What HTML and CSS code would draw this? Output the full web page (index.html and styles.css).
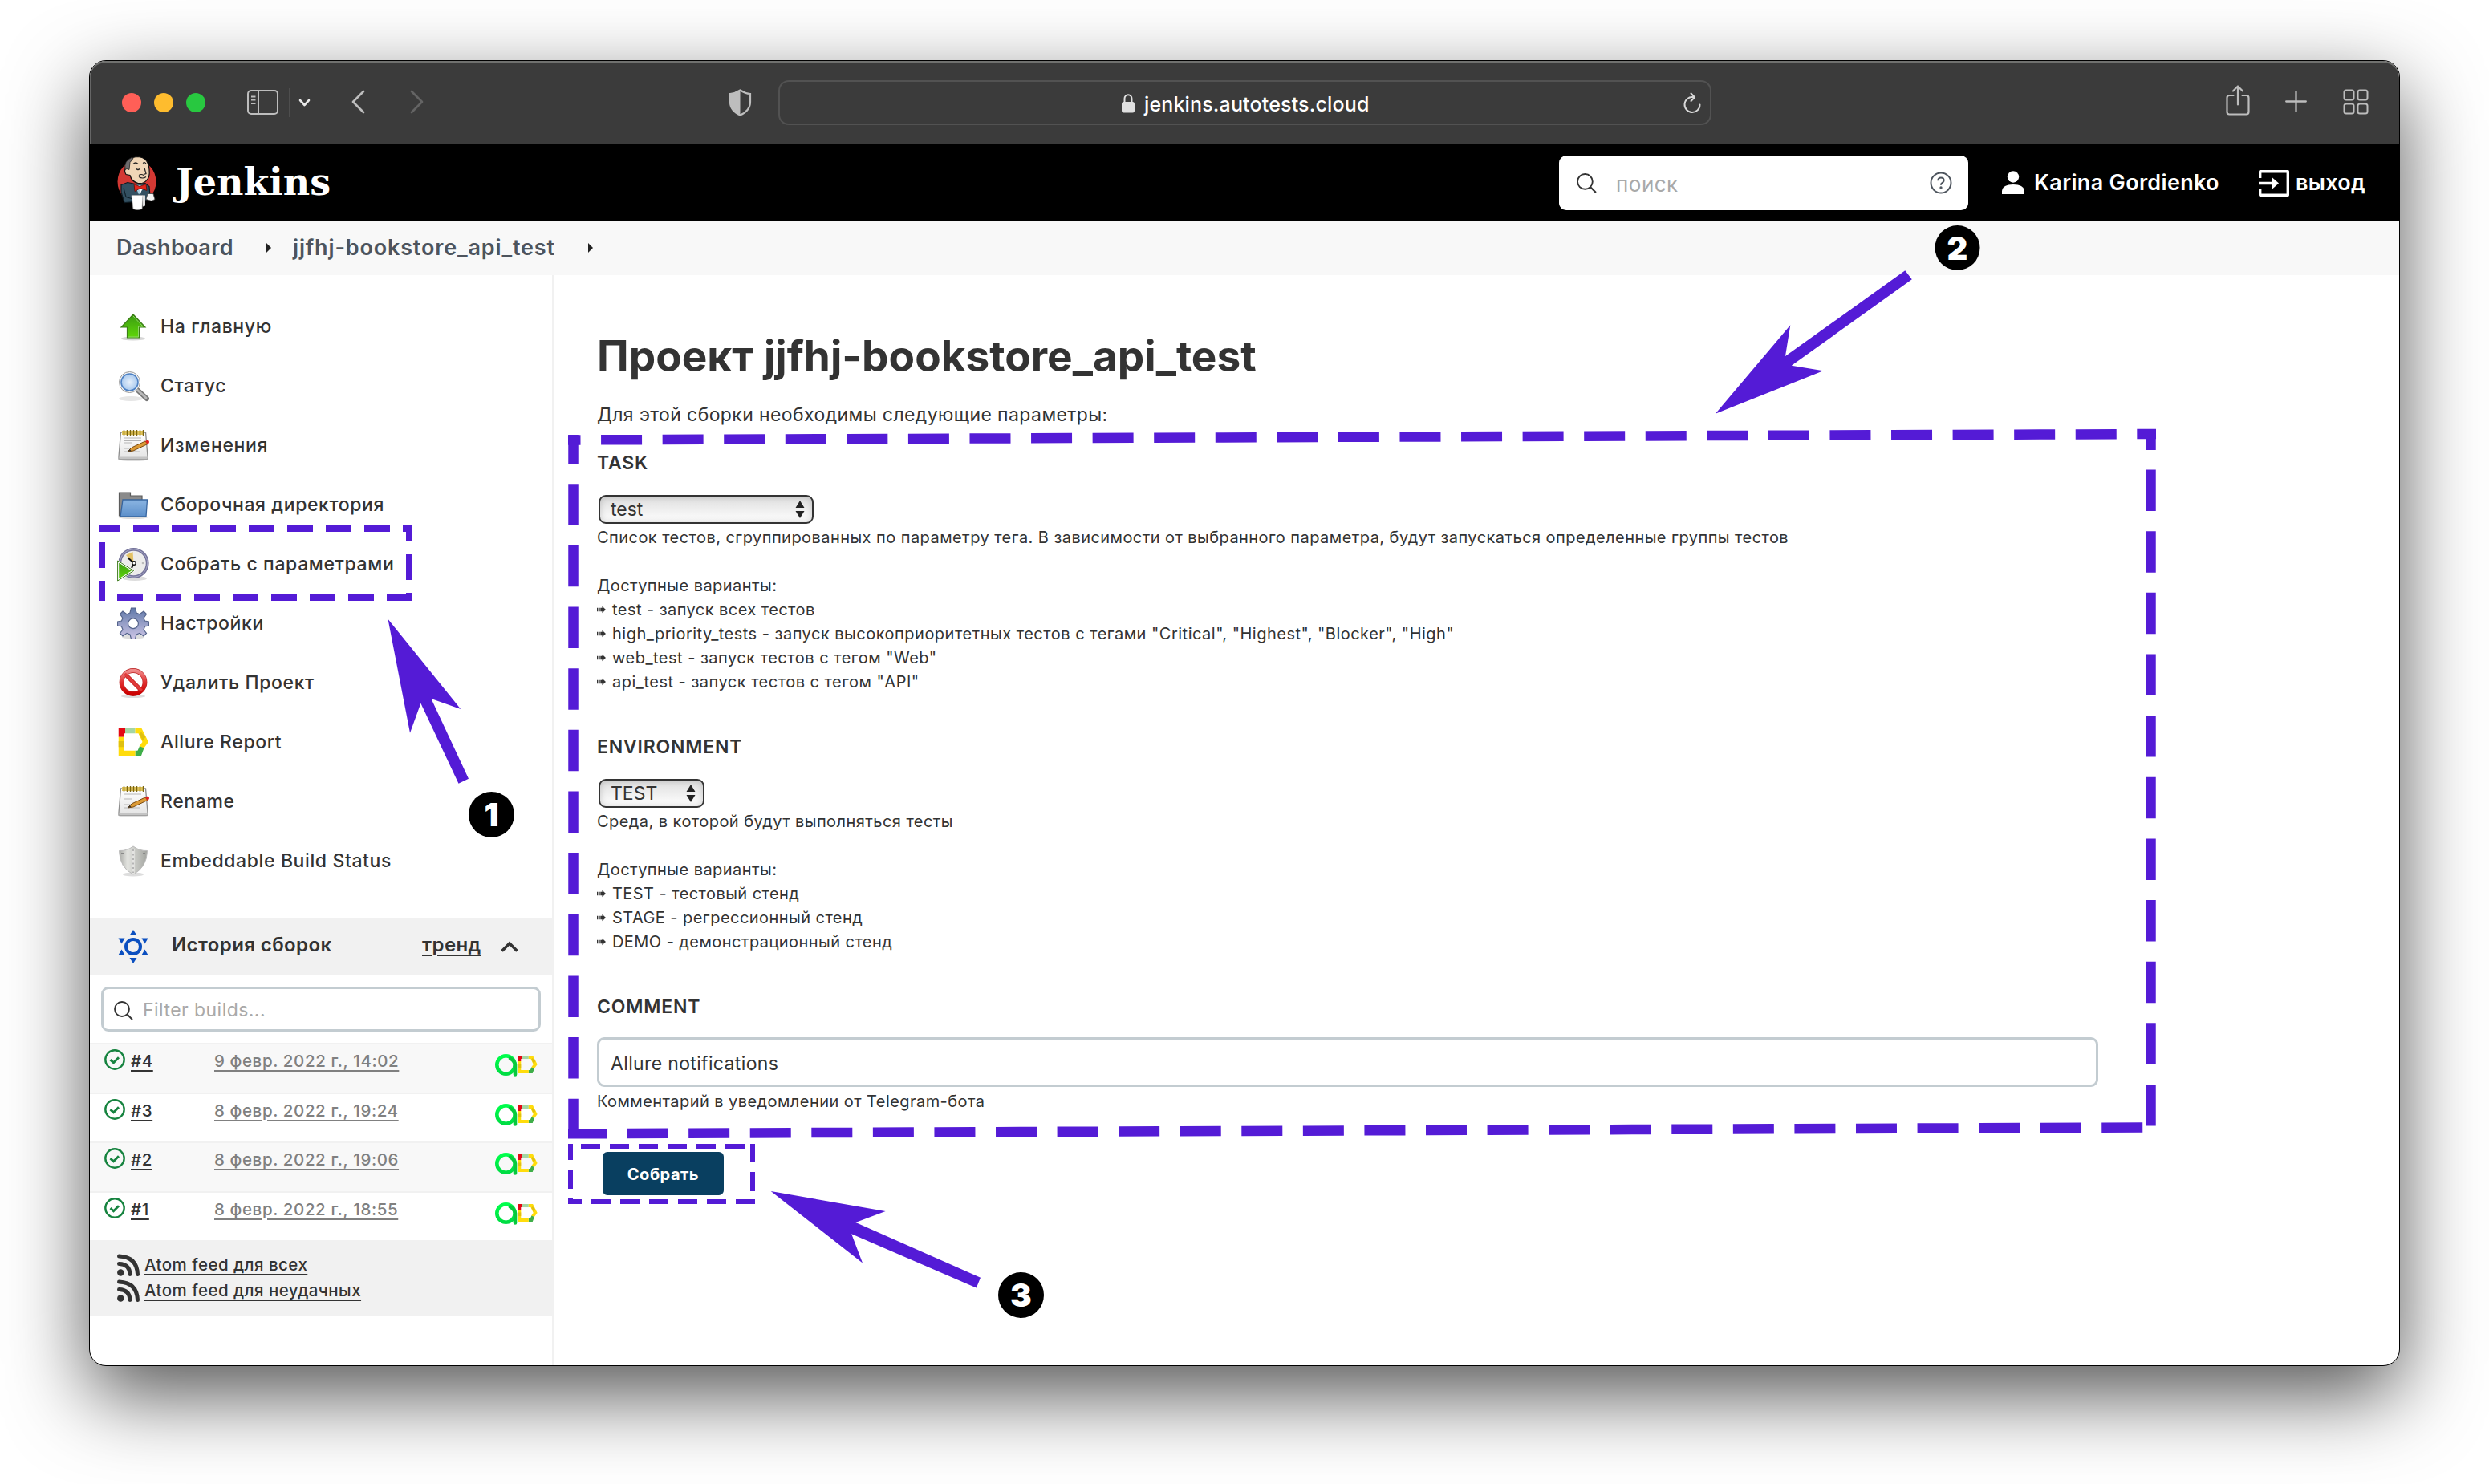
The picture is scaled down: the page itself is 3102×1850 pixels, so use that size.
FILE: index.html
```html
<!DOCTYPE html>
<html lang="ru">
<head>
<meta charset="utf-8">
<title>jjfhj-bookstore_api_test [Jenkins]</title>
<link rel="stylesheet" href="styles.css">
</head>
<body>
<svg width="0" height="0" class="defs">
  <defs>
    <linearGradient id="green" x1="0" y1="0" x2="0" y2="1"><stop offset="0" stop-color="#3a9a12"/><stop offset="1" stop-color="#60d808"/></linearGradient>
    <linearGradient id="blue" x1="0" y1="0" x2="0" y2="1"><stop offset="0" stop-color="#8bb5e2"/><stop offset="1" stop-color="#5c8fca"/></linearGradient>
    <linearGradient id="gearfill" x1="0" y1="0" x2="0" y2="1"><stop offset="0" stop-color="#5f78a8"/><stop offset="1" stop-color="#cdc5e6"/></linearGradient>
    <linearGradient id="red" x1="0" y1="0" x2="0" y2="1"><stop offset="0" stop-color="#f08a8a"/><stop offset=".5" stop-color="#e03030"/><stop offset="1" stop-color="#cc0000"/></linearGradient>
    <linearGradient id="steel" x1="0" y1="0" x2="1" y2="0"><stop offset="0" stop-color="#a9aaa6"/><stop offset=".3" stop-color="#e3e4e0"/><stop offset="1" stop-color="#a2a49f"/></linearGradient>
    <radialGradient id="lens"><stop offset="0" stop-color="#e6f0fb"/><stop offset="1" stop-color="#a9c9ee"/></radialGradient>
    <linearGradient id="paper" x1="0" y1="0" x2="0" y2="1"><stop offset="0" stop-color="#ffffff"/><stop offset="1" stop-color="#e4e4e4"/></linearGradient>
    <linearGradient id="ring" x1="0" y1="0" x2="0" y2="1"><stop offset="0" stop-color="#00ff4c"/><stop offset="1" stop-color="#00dd43"/></linearGradient>
    <symbol id="notepad" viewBox="0 0 40 40">
      <ellipse cx="20" cy="38" rx="18" ry="2" fill="#ddd"/>
      <path d="M4.500 4h31l2.500 30v3h-36v-3z" fill="url(#paper)" stroke="#8d8d8d" stroke-width="1.300"/>
      <path d="M2.500 34.500h35v2.500h-35z" fill="#c4c4c4"/>
      <path d="M8 11h22M8 14.500h22M8 17h11M8 24h9M8 28h20" stroke="#b5b5b5" stroke-width="1.200"/>
      <path d="M6 2h28v5h-28z" fill="#e0c45a"/>
      <path d="M8.500 1v7M12.500 1v7M16.500 1v7M20.500 1v7M24.500 1v7M28.500 1v7M32.500 1v7" stroke="#7b6510" stroke-width="1.400"/>
      <path d="M13 28l5-5 17-8 3 3.500-18 8.500z" fill="#dc9a35" stroke="#7a4a10" stroke-width="1"/>
      <path d="M35 15l3-1.500q3 1 1.500 4l-2 1.200z" fill="#e02020"/>
      <path d="M13 28l3-3 1.500 2z" fill="#333"/>
    </symbol>
    <symbol id="allure" viewBox="0 0 38 38" preserveAspectRatio="none">
      <path d="M0 0h8.500v7h-2v5h-6.500z" fill="#e40914"/>
      <path d="M8.500 0h12.500v7h-12.500z" fill="#a5d6a3"/>
      <path d="M21 0h8l8.500 19-6 9-5.500-3 4-6-5-12h-4z" fill="#ffdc0c"/>
      <path d="M28.500 5l5.500 7-3.500 5-4.500-9z" fill="#e0c010"/>
      <path d="M32 27.500l-3.500 10.500h-7.500v-7h3l2.500-6z" fill="#3fae49"/>
      <path d="M0 12h6.500v19h14.500v7h-21z" fill="#ffdc0c"/>
      <path d="M0 18h6.500v8h-6.500z" fill="#e0c010"/>
    </symbol>
    <symbol id="ok" viewBox="0 0 26 26">
      <circle cx="13" cy="13" r="11.700" fill="none" stroke="#16833f" stroke-width="2.400"/>
      <path d="M7.500 13.200l4 3.600 6.500-6.500" fill="none" stroke="#16833f" stroke-width="2.900"/>
    </symbol>
    <symbol id="allurems" viewBox="0 0 28 28">
      <circle cx="13.500" cy="13.500" r="11.200" fill="none" stroke="url(#ring)" stroke-width="4.600"/>
      <path d="M19 5.500a11.200 11.200 0 0 1 6 8v12" fill="none" stroke="#06c93e" stroke-width="4.600" stroke-linecap="round"/>
    </symbol>
    <symbol id="rss" viewBox="0 0 28 28">
      <circle cx="4.300" cy="23.500" r="4.200" fill="#333"/>
      <path d="M2.500 12.500q13 .5 13.500 13M2.500 3q22 1 23 22.500" fill="none" stroke="#333" stroke-width="5" stroke-linecap="round"/>
    </symbol>
    <symbol id="search" viewBox="0 0 24 24">
      <circle cx="10" cy="10" r="9" fill="none" stroke="#333" stroke-width="1.800"/>
      <path d="M16.500 16.500l6.500 6.500" stroke="#333" stroke-width="2"/>
    </symbol>
    <symbol id="pointer" viewBox="0 0 11 10">
      <path d="M0 2.800h1.400v4.400h-1.400zM2.100 2.800h1.600v4.400h-1.600zM4.300 2.800h2.200v-2l4.500 4.200-4.500 4.200v-2h-2.200z" fill="#333"/>
    </symbol>
  </defs>
</svg>

<div class="window">
  <div class="toolbar">
    <div class="lights"><i class="light close"></i><i class="light mini"></i><i class="light full"></i></div>
    <svg class="t-panel" width="39" height="31" viewBox="0 0 39 31" fill="none" stroke="#bdbdbd" stroke-width="2"><rect x="1" y="1" width="37" height="29" rx="4"/><path d="M14 1v29M5 8.500h5.500M5 12.500h5.500M5 17h5.500"/></svg>
    <i class="t-sep"></i>
    <svg class="t-down" width="15" height="10" viewBox="0 0 15 10" fill="none" stroke="#e8e8e8" stroke-width="2.600" stroke-linecap="round" stroke-linejoin="round"><path d="M2 2l5.500 6 5.500-6"/></svg>
    <svg class="t-back" width="17" height="30" viewBox="0 0 17 30" fill="none" stroke="#bdbdbd" stroke-width="2.700" stroke-linecap="round" stroke-linejoin="round"><path d="M15 2l-13 13 13 13"/></svg>
    <svg class="t-fwd" width="17" height="30" viewBox="0 0 17 30" fill="none" stroke="#646464" stroke-width="2.700" stroke-linecap="round" stroke-linejoin="round"><path d="M2 2l13 13-13 13"/></svg>
    <svg class="t-shield" width="29" height="34" viewBox="0 0 29 34"><path d="M14.500 1.500q6 4 12.500 4.500v10q0 11-12.500 16.500q-12.500-5.500-12.500-16.500v-10q6.500-.5 12.500-4.500z" fill="none" stroke="#bdbdbd" stroke-width="2.200"/><path d="M14.500 1v32q-13-6-13-17v-10q7-.5 13-5z" fill="#bdbdbd"/></svg>
    <div class="address">
      <svg width="16" height="24" viewBox="0 0 16 24"><rect y="10" width="16" height="13.500" rx="2.500" fill="#e0e0e0"/><path d="M3.500 10.500v-4.500a4.500 4.800 0 0 1 9 0v4.500" fill="none" stroke="#e0e0e0" stroke-width="2"/></svg>
      <span>jenkins.autotests.cloud</span>
      <svg class="reload" width="24" height="28" viewBox="0 0 24 28" fill="none" stroke="#d8d8d8" stroke-width="2" stroke-linecap="round" stroke-linejoin="round"><path d="M21.500 15.500a9.500 9.500 0 1 1-8.500-9.400M10.500 1.500l4.500 4.800-4.500 4.700"/></svg>
    </div>
    <svg class="t-share" width="30" height="38" viewBox="0 0 30 38" fill="none" stroke="#bdbdbd" stroke-width="2.200" stroke-linecap="round" stroke-linejoin="round"><path d="M9.500 13h-5q-3 0-3 3v17.500q0 3 3 3h21q3 0 3-3v-17.500q0-3-3-3h-5M15 24.500v-23M9 7.500l6-6 6 6"/></svg>
    <svg class="t-plus" width="27" height="27" viewBox="0 0 27 27" stroke="#bdbdbd" stroke-width="2.300" stroke-linecap="round"><path d="M13.500 1.200v24.600M1.200 13.500h24.600"/></svg>
    <svg class="t-grid" width="32" height="32" viewBox="0 0 32 32" fill="none" stroke="#bdbdbd" stroke-width="2"><rect x="1.500" y="1.500" width="12" height="12" rx="2.500"/><rect x="18.500" y="1.500" width="12" height="12" rx="2.500"/><rect x="1.500" y="18.500" width="12" height="12" rx="2.500"/><rect x="18.500" y="18.500" width="12" height="12" rx="2.500"/></svg>
  </div>

  <header class="header">
    <svg class="mascot" width="52" height="70" viewBox="14 12.500 52 70">
      <ellipse cx="40.500" cy="46" rx="24" ry="26" fill="#d33833"/>
      <path d="M21 50l8-3 10 2 12-1 5 4 1 12-6 6-26 2-4-13z" fill="#335061" stroke="#0d1a22" stroke-width="1.200"/>
      <path d="M38 50l5 12 8-11z" fill="#a8cfe0"/><path d="M43 52l2 9 3-9z" fill="#fff"/>
      <path d="M27 29q2-14 15-14 13 1 14 16 1 9-3 13-4 5-11 4-8-2-10-10l-5-1q-3-5 0-8z" fill="#f0d6b7" stroke="#111" stroke-width="1.200"/>
      <path d="M26 31q-2-11 8-15l2 1-4 5-1 9-3-1z" fill="#6d6b6d" stroke="#222" stroke-width=".8"/>
      <path d="M36 24q3-3 6 0M48 23q3-2 4 1M40 30q2 2 4 0M50 29l2 7-3 1M43 40q5 3 9 0M43 38q3-2 6 0" fill="none" stroke="#222" stroke-width="1.200"/>
      <path d="M37 49l7 3 8-3 1 8-8-3-7 4z" fill="#e1251b" stroke="#5c0d08" stroke-width=".8"/>
      <path d="M34 63l14 0-1 17q-6 2-11 0z" fill="#fff" stroke="#aaa" stroke-width=".7"/>
      <path d="M48 63h3v13l-3 1z" fill="#ddd"/>
      <path d="M54 61l7 0 2 7-4 2-7-2z" fill="#f4f4f4" stroke="#444" stroke-width=".8"/>
      <path d="M24 54l3 11 7 2" fill="none" stroke="#12222c" stroke-width="1.200"/>
    </svg>
    <span class="brand">Jenkins</span>
    <div class="find">
      <svg width="25" height="25"><use href="#search"/></svg>
      <span class="find-hint">поиск</span>
      <svg class="help" width="28" height="28" viewBox="0 0 28 28" fill="none" stroke="#4d545d" stroke-width="2"><circle cx="14" cy="14" r="12.500"/><path d="M10.300 11.200q.2-3.700 3.700-3.700t3.700 3.300q0 2-2 3.100-1.700 1-1.700 2.800"/><circle cx="14" cy="20" r=".7" fill="#4d545d"/></svg>
    </div>
    <svg class="person" width="28" height="29" viewBox="0 0 28 29" fill="#fff"><circle cx="14" cy="7.500" r="7.200"/><path d="M0 29v-4q1-8 14-8t14 8v4z"/></svg>
    <span class="user">Karina Gordienko</span>
    <svg class="exit" width="38" height="33" viewBox="0 0 38 33"><path d="M1.700 10v-8.300h34.600v29.600h-34.600v-8.300" fill="none" stroke="#fff" stroke-width="3.400" stroke-linejoin="round"/><path d="M0 16.500h20" stroke="#fff" stroke-width="3.400"/><path d="M17 9.500l8 7-8 7z" fill="#fff"/></svg>
    <span class="user logout">выход</span>
  </header>

  <nav class="crumbs">
    <span>Dashboard</span><i class="tri"></i><span class="project">jjfhj-bookstore_api_test</span><i class="tri last"></i>
  </nav>

  <div class="content">
    <aside class="side">
      <ul class="tasks">
        <li><svg width="40" height="40" viewBox="0 0 40 40"><ellipse cx="20" cy="35" rx="15" ry="2.500" fill="#d5d5d5"/><path d="M20 5l15 16h-7.500v13h-15v-13h-7.500z" fill="url(#green)" stroke="#3b7d16" stroke-width="1.200"/><path d="M20 7l12 13h-5.500v13h-13" fill="none" stroke="#8fd66a" stroke-width="1"/></svg>На главную</li>
        <li><svg width="40" height="40" viewBox="0 0 40 40"><ellipse cx="17" cy="36" rx="15" ry="3" fill="#e6e6e6"/><path d="M24 24l13 12" stroke="#777" stroke-width="6" stroke-linecap="round"/><path d="M25 25l11 10" stroke="#b9b9b9" stroke-width="3" stroke-linecap="round"/><circle cx="15.500" cy="15.500" r="13" fill="#f5f5f5" stroke="#999" stroke-width="1"/><circle cx="15.500" cy="15.500" r="10.500" fill="url(#lens)" stroke="#4f82c4" stroke-width="1.600"/></svg>Статус</li>
        <li><svg width="40" height="40"><use href="#notepad"/></svg>Изменения</li>
        <li><svg width="40" height="40" viewBox="0 0 40 40"><ellipse cx="20" cy="36" rx="18" ry="2" fill="#ddd"/><path d="M2.500 5h14v4h14.500v25h-28.500z" fill="#8b8b8b" stroke="#5c5c5c" stroke-width="1.200"/><path d="M7 14h30.500l-1.500 21h-32z" fill="url(#blue)" stroke="#37659f" stroke-width="1.300"/></svg>Сборочная директория</li>
        <li><svg width="40" height="44" viewBox="0 0 40 44"><ellipse cx="22" cy="40" rx="15" ry="3" fill="#ddd"/><circle cx="20.500" cy="21" r="17.200" fill="#ececeb" stroke="#74739a" stroke-width="3.800"/><circle cx="20.500" cy="21" r="17.200" fill="none" stroke="#a9a9c8" stroke-width="1"/><path d="M20.500 21l-9.500-10 8.500-4z" fill="#e3c266"/><path d="M21 21l-8-7M21 21l-3 6" stroke="#111" stroke-width="2"/><circle cx="21" cy="21" r="2.200" fill="#fff" stroke="#111" stroke-width="1.400"/><circle cx="32" cy="21" r="1.300" fill="#bbb"/><path d="M1 18.500v24l19-12z" fill="url(#green)" stroke="#fff" stroke-width="2.400"/><path d="M.6 18v25l20-12.500z" fill="none" stroke="#3e7b1d" stroke-width="1"/></svg>Собрать с параметрами</li>
        <li><svg width="40" height="40" viewBox="0 0 40 40"><ellipse cx="20" cy="37" rx="14" ry="2.500" fill="#ddd"/><path fill-rule="evenodd" d="M17.500 1h5l1.500 6 4 1.700 5-3.700 3.500 3.500-3.500 5 1.500 3.500 5 1v5l-5 1-1.500 4 3.500 4.500-3.500 3.500-5-3.500-4 1.500-1.500 5.500h-5l-1.500-5.500-4-1.500-5 3.500-3.500-3.500 3.500-4.500-1.500-4-5-1v-5l5-1 1.500-3.500-3.500-5 3.500-3.500 5 3.700 4-1.700zM20 14a6.300 6.300 0 1 0 .01 0z" fill="url(#gearfill)" stroke="#55648c" stroke-width="1.200"/></svg>Настройки</li>
        <li><svg width="40" height="40" viewBox="0 0 40 40"><ellipse cx="20" cy="37" rx="15" ry="2" fill="#ddd"/><circle cx="20" cy="19.500" r="14.500" fill="#fff" stroke="#b82020" stroke-width="5.800"/><path d="M10 9.500l20 20" stroke="#c01818" stroke-width="5.200"/><circle cx="20" cy="19.500" r="14.500" fill="none" stroke="url(#red)" stroke-width="4.600"/><path d="M9.500 9l21 21" stroke="#e03a3a" stroke-width="3.800"/></svg>Удалить Проект</li>
        <li><svg width="40" height="34"><use href="#allure" x="1.500" width="38" height="34"/></svg>Allure Report</li>
        <li><svg width="40" height="40"><use href="#notepad"/></svg>Rename</li>
        <li><svg width="40" height="40" viewBox="0 0 40 40"><ellipse cx="20" cy="37" rx="13" ry="2.500" fill="#ddd"/><path d="M20 2q8 6 17.500 5.500-.5 21-17.500 29.500-17-8.500-17.500-29.500 9.500.5 17.500-5.500z" fill="url(#steel)" stroke="#bbb" stroke-width="1"/><path d="M20 5v31" stroke="#e4e4e2" stroke-width="3.500"/><path d="M20 6v29" stroke="#b5b5b5" stroke-width="2" stroke-dasharray="2 3.500"/><path d="M5 11h3M32 11h3" stroke="#888" stroke-width="2"/></svg>Embeddable Build Status</li>
      </ul>
      <div class="history">
        <svg width="38" height="42" viewBox="0 0 38 42" fill="#0b4fc0"><circle cx="19" cy="21" r="9" fill="none" stroke="#0b4fc0" stroke-width="4"/><path d="M19 0l4.500 7h-9zM19 42l4.500-7h-9zM.5 10.500h8l-4 7zM37.500 10.500h-8l4 7zM.5 31.500h8l-4-7zM37.500 31.500h-8l4-7z"/></svg>
        <span class="h-title">История сборок</span>
        <span class="h-trend">тренд</span>
        <svg class="h-up" width="22" height="14" viewBox="0 0 22 14" fill="none" stroke="#333" stroke-width="3.600"><path d="M1.500 12.500l9.500-9.500 9.500 9.500"/></svg>
      </div>
      <div class="filter"><svg width="24" height="24"><use href="#search"/></svg><span>Filter builds...</span></div>
      <ul class="builds">
        <li><svg class="ok" width="26" height="26"><use href="#ok"/></svg><a class="num">#4</a><a class="date">9 февр. 2022 г., 14:02</a><svg class="ams" width="28" height="28"><use href="#allurems"/></svg><svg class="rep" width="25" height="22"><use href="#allure"/></svg></li>
        <li><svg class="ok" width="26" height="26"><use href="#ok"/></svg><a class="num">#3</a><a class="date">8 февр. 2022 г., 19:24</a><svg class="ams" width="28" height="28"><use href="#allurems"/></svg><svg class="rep" width="25" height="22"><use href="#allure"/></svg></li>
        <li><svg class="ok" width="26" height="26"><use href="#ok"/></svg><a class="num">#2</a><a class="date">8 февр. 2022 г., 19:06</a><svg class="ams" width="28" height="28"><use href="#allurems"/></svg><svg class="rep" width="25" height="22"><use href="#allure"/></svg></li>
        <li><svg class="ok" width="26" height="26"><use href="#ok"/></svg><a class="num">#1</a><a class="date">8 февр. 2022 г., 18:55</a><svg class="ams" width="28" height="28"><use href="#allurems"/></svg><svg class="rep" width="25" height="22"><use href="#allure"/></svg></li>
      </ul>
      <div class="feeds">
        <div><svg width="28" height="28"><use href="#rss"/></svg><a>Atom feed для всех</a></div>
        <div><svg width="28" height="28"><use href="#rss"/></svg><a>Atom feed для неудачных</a></div>
      </div>
    </aside>

    <main class="main">
      <h1>Проект jjfhj-bookstore_api_test</h1>
      <p class="lead">Для этой сборки необходимы следующие параметры:</p>

      <section class="param task">
        <h2>TASK</h2>
        <div class="select wide"><span>test</span><svg width="12" height="24" viewBox="0 0 12 24" fill="#222"><path d="M6 1l5.500 9h-11zM6 23l5.500-9h-11z"/></svg></div>
        <div class="desc">
          <p>Список тестов, сгруппированных по параметру тега. В зависимости от выбранного параметра, будут запускаться определенные группы тестов</p>
          <p class="opts">Доступные варианты:</p>
          <p class="opt"><svg width="11" height="10"><use href="#pointer"/></svg>test - запуск всех тестов</p>
          <p class="opt latin"><svg width="11" height="10"><use href="#pointer"/></svg>high_priority_tests - запуск высокоприоритетных тестов с тегами "Critical", "Highest", "Blocker", "High"</p>
          <p class="opt latin"><svg width="11" height="10"><use href="#pointer"/></svg>web_test - запуск тестов с тегом "Web"</p>
          <p class="opt latin"><svg width="11" height="10"><use href="#pointer"/></svg>api_test - запуск тестов с тегом "API"</p>
        </div>
      </section>

      <section class="param env">
        <h2>ENVIRONMENT</h2>
        <div class="select"><span>TEST</span><svg width="12" height="24" viewBox="0 0 12 24" fill="#222"><path d="M6 1l5.500 9h-11zM6 23l5.500-9h-11z"/></svg></div>
        <div class="desc">
          <p>Среда, в которой будут выполняться тесты</p>
          <p class="opts">Доступные варианты:</p>
          <p class="opt"><svg width="11" height="10"><use href="#pointer"/></svg>TEST - тестовый стенд</p>
          <p class="opt"><svg width="11" height="10"><use href="#pointer"/></svg>STAGE - регрессионный стенд</p>
          <p class="opt"><svg width="11" height="10"><use href="#pointer"/></svg>DEMO - демонстрационный стенд</p>
        </div>
      </section>

      <section class="param comment">
        <h2>COMMENT</h2>
        <div class="input">Allure notifications</div>
        <div class="desc"><p>Комментарий в уведомлении от Telegram-бота</p></div>
      </section>

      <button class="build">Собрать</button>
    </main>
  </div>
</div>

<svg class="marks" width="3102" height="1850" viewBox="0 0 3102 1850">
  <g fill="none" stroke="#541bd6">
    <g stroke-width="8">
      <path d="M123 659H150M166 659H514" stroke-dasharray="32 16"/>
      <path d="M510 655V675M510 691V723M510 739V749"/>
      <path d="M127 676V708M127 724V749"/>
      <path d="M146 745H514" stroke-dasharray="32 16"/>
    </g>
    <g stroke-width="12.500">
      <path d="M708 548.500L2687 541" stroke-dasharray="51 25.570" stroke-dashoffset="35.500"/>
      <path d="M714.500 542V578M714.500 603.200V1419" stroke-dasharray="51.500 25.150"/>
      <path d="M708 1413.300H756M781.600 1413L2672 1405.500" stroke-dasharray="51 25.570"/>
      <path d="M2680.500 535V561M2680.500 585.500V1403.500" stroke-dasharray="51.500 25.150"/>
    </g>
    <g stroke-width="6">
      <path d="M724 1429H928" stroke-dasharray="24 12"/>
      <path d="M938 1426V1449M938 1461V1485"/>
      <path d="M711 1426V1446M711 1458V1482M711 1494V1501"/>
      <path d="M708 1498H725M737 1498H941" stroke-dasharray="24 12"/>
    </g>
  </g>
  <g fill="#541bd6">
    <path d="M483.500 771.700L574.200 884 537.400 871 584 970.700 571.500 976.700 524.400 876.700 511 913.700z"/>
    <path d="M2137.900 515.700L2231.300 405.300 2225 444 2374.300 337.300 2382.800 348.300 2232.700 455.700 2272.400 462.300z"/>
    <path d="M960.700 1485L1103.600 1510 1066.300 1523.900 1222 1592.800 1216.800 1605.500 1061.200 1538.200 1075 1574.400z"/>
  </g>
  <circle cx="612.500" cy="1015.500" r="28.500"/><circle cx="2439.500" cy="309" r="28"/><circle cx="1272.500" cy="1614.500" r="28.500"/>
  <g class="nums"><text x="612.500" y="1030">1</text><text x="2439.500" y="323.500">2</text><text x="1272.500" y="1629">3</text></g>
</svg>
</body>
</html>
```
FILE: styles.css
```css
* { box-sizing: border-box; }
body { margin: 0; width: 3102px; height: 1850px; overflow: hidden; background: #fff; padding: 75px 111px; font-family: Inter, "Liberation Sans", sans-serif; color: #333; position: relative; }
h1, h2, p, ul { margin: 0; padding: 0; font-weight: 400; list-style: none; }
svg { display: block; flex: none; }
i { font-style: normal; flex: none; }
span { white-space: nowrap; }
.defs { position: absolute; }

.window { width: 2880px; height: 1628px; border: 1px solid #000; border-radius: 21px; overflow: hidden; background: #fff; box-shadow: 0 36px 100px rgba(0, 0, 0, .67); display: flex; flex-direction: column; }

.toolbar { height: 104px; flex: none; background: #3b3b3b; display: flex; align-items: center; border-radius: 20px 20px 0 0; box-shadow: inset 0 2px 0 #70716f, inset 1px 0 0 #666; }
.lights { display: flex; gap: 16px; margin-left: 40px; }
.light { width: 24px; height: 24px; border-radius: 50%; }
.close { background: #ff5f57; }
.mini { background: #febc2e; }
.full { background: #28c840; }
.t-panel { margin-left: 52px; margin-top: -2px; }
.t-sep { width: 2px; height: 36px; background: #4e4e4e; margin-left: 13px; }
.t-down { margin-left: 10px; }
.t-back { margin-left: 51px; margin-top: -2px; }
.t-fwd { margin-left: 56px; margin-top: -2px; }
.t-shield { margin-left: 380px; margin-top: -1px; }
.address { width: 1163px; height: 56px; margin-left: 33px; border: 2px solid #525252; border-radius: 13px; display: flex; align-items: center; padding-left: 426px; padding-top: 3px; font-size: 25px; font-weight: 500; letter-spacing: .15px; color: #fff; }
.address svg { margin-top: -2px; }
.address span { margin-left: 12px; }
.address .reload { margin-left: auto; margin-right: 10px; }
.t-share { margin-left: 641px; margin-top: -6px; }
.t-plus { margin-left: 44px; margin-top: -3px; }
.t-grid { margin-left: 45px; margin-top: -2px; }

.header { height: 95px; flex: none; background: #000; color: #fff; display: flex; align-items: center; padding-left: 32px; }
.header > * { flex: none; }
.brand { font: 700 46px "DejaVu Serif", serif; margin-left: 23px; width: 1724px; margin-top: -2px; }
.find { width: 510px; height: 68px; background: #fff; border-radius: 9px; display: flex; align-items: center; padding: 0 20px 0 22px; margin-top: 1px; }
.find-hint { font-size: 26px; letter-spacing: .5px; color: #a9a9a9; margin-left: 24px; margin-top: 2px; }
.help { margin-left: auto; }
.person { margin-left: 42px; }
.user { font-size: 27px; font-weight: 600; letter-spacing: .32px; margin-left: 12px; width: 232px; }
.exit { margin-left: 48px; margin-top: 2px; }
.logout { margin-left: 8px; width: 100px; }

.crumbs { height: 68px; flex: none; background: #f8f8f8; display: flex; align-items: center; padding: 0 0 2px 33px; font-size: 27px; font-weight: 600; letter-spacing: .4px; color: #4d545d; }
.crumbs span { width: 146px; }
.crumbs .project { width: 327px; letter-spacing: .83px; }
.tri { border: 6px solid transparent; border-left: 6.500px solid #222; border-right: 0; margin: 2px 27px 0 41px; }

.content { flex: 1; display: flex; }
.side { width: 578px; border-right: 2px solid #f1f1f1; padding-top: 27px; flex: none; }
.tasks li { height: 74px; padding-left: 34px; display: flex; align-items: center; gap: 14px; font-size: 23px; font-weight: 500; letter-spacing: .61px; white-space: nowrap; }
.history { height: 72px; margin-top: 34px; padding-left: 35px; background: #f1f1f1; display: flex; align-items: center; font-size: 24px; font-weight: 600; letter-spacing: .4px; }
.h-title { margin-left: 29px; width: 312px; margin-top: -5px; }
.h-trend { text-decoration: underline; text-decoration-thickness: 2px; text-underline-offset: 4px; margin-top: -5px; width: 74px; }
.h-up { margin-left: 24px; }
.filter { margin: 14px 14px 14px 14px; height: 56px; border: 3px solid #c3ccd1; border-radius: 9px; display: flex; align-items: center; gap: 12px; padding: 1px 0 0 13px; font-size: 23px; letter-spacing: .45px; color: #a9a9a9; }
.filter svg { margin-top: 3px; }
.builds li { height: 61.500px; border-top: 2px solid #f1f1f1; display: flex; align-items: flex-start; padding-left: 18px; font-size: 20.500px; line-height: 42px; font-weight: 500; letter-spacing: .6px; }
.builds li:nth-child(odd) { background: #f8f8f8; }
.builds a, .feeds a { text-decoration: underline; text-decoration-thickness: 1.500px; text-underline-offset: 4px; white-space: nowrap; }
.ok { margin-top: 6px; }
.num { margin-left: 7px; }
.date { margin-left: auto; color: #808080; width: 231px; }
.ams { margin: 12px 0 0 119px; }
.rep { margin: 14px 18px 0 0; }
.feeds { height: 95px; background: #f1f1f1; padding: 14.500px 0 0 34px; font-size: 20.500px; font-weight: 500; letter-spacing: .46px; }
.feeds div { height: 32px; display: flex; align-items: center; gap: 6px; }

.main { flex: 1; padding: 69px 0 0 54px; }
h1 { font-size: 53.100px; line-height: 64px; font-weight: 700; }
.lead { margin-top: 26px; font-size: 23px; line-height: 30px; letter-spacing: .4px; }
h2 { font-size: 23px; line-height: 30px; font-weight: 600; letter-spacing: .8px; }
.task { margin-top: 30px; }
.env { margin-top: 51px; }
.comment { margin-top: 51px; }
.select { width: 132px; height: 36px; margin: 25px 0 0 2px; border: 2px solid #333; border-radius: 9px; background: linear-gradient(#dedede, #fff); box-shadow: inset 0 0 8px rgba(0, 0, 0, .18); display: flex; align-items: center; justify-content: space-between; padding: 0 9px 0 13px; font-size: 23px; }
.wide { width: 268px; }
.desc { margin-top: 2px; font-size: 20px; line-height: 30px; letter-spacing: .44px; white-space: nowrap; }
.opts { margin-top: 30px; }
.opt { display: flex; align-items: center; gap: 8px; }
.latin { letter-spacing: .49px; }
.input { width: 1871px; height: 62px; margin-top: 23px; border: 3px solid #c3ccd1; border-radius: 9px; display: flex; align-items: center; padding: 3px 0 0 14px; font-size: 23px; letter-spacing: .35px; }
.comment .desc { margin-top: 3px; }
.build { display: block; width: 151px; height: 54px; margin: 48px 0 0 7px; padding: 1px 0 0; border: 0; border-radius: 6px; background: #093f60; color: #fff; font: 700 20px Inter, sans-serif; letter-spacing: .5px; }

.marks { position: absolute; left: 0; top: 0; }
.nums { fill: #fff; font: 900 40px Inter, sans-serif; text-anchor: middle; }
```
